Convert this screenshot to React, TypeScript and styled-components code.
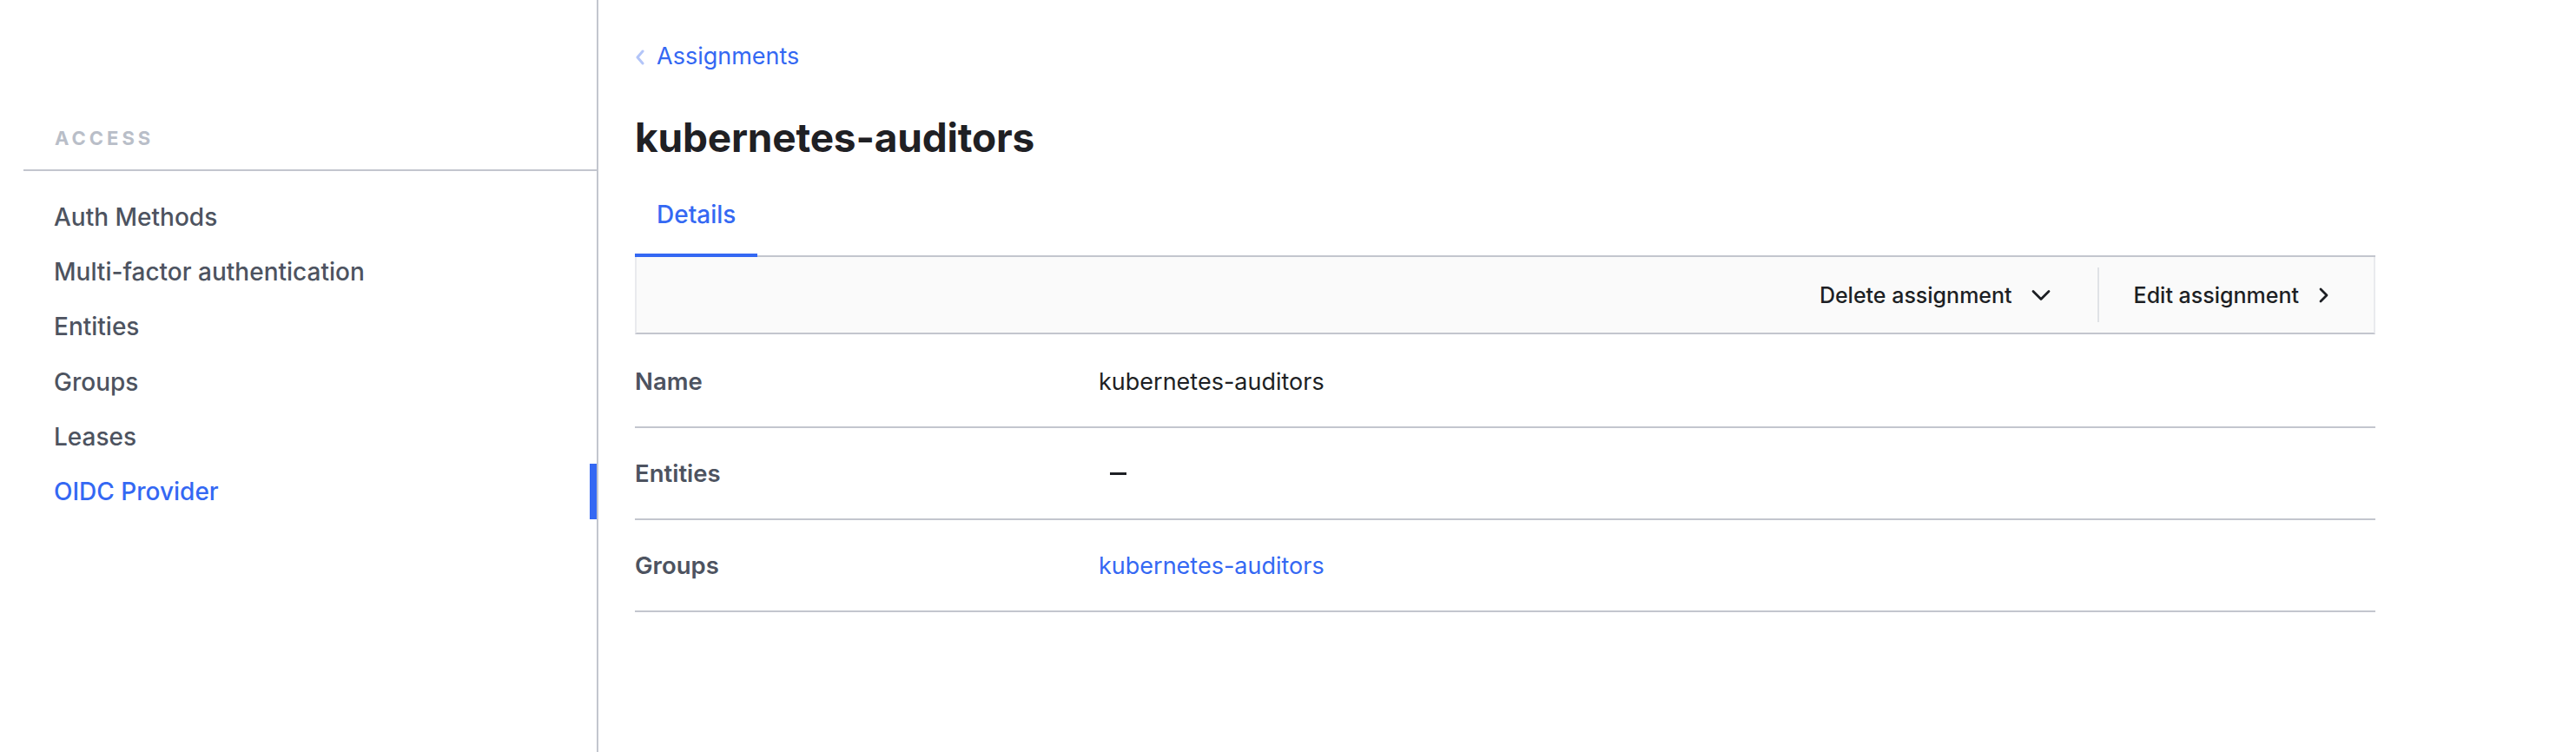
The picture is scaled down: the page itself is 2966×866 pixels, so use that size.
import React from "react";
import styled, { createGlobalStyle } from "styled-components";

const GlobalStyle = createGlobalStyle`
  html, body { margin: 0; padding: 0; background: #ffffff; }
  body { font-family: Inter, "Noto Sans", "Liberation Sans", sans-serif; -webkit-font-smoothing: antialiased; }
  * { box-sizing: border-box; }
`;

const BLUE = "#3468f3";
const LINE = "#c3c6ce";

const Page = styled.div`
  display: flex;
  min-height: 866px;
`;

const Sidebar = styled.nav`
  width: 689px;
  flex-shrink: 0;
  border-right: 2px solid ${LINE};
  padding: 146px 0 0 27px;
`;

const SectionLabel = styled.div`
  font-size: 22px;
  line-height: 26px;
  font-weight: 700;
  letter-spacing: 4px;
  color: #b9bec8;
  padding: 0 0 23px 36px;
  border-bottom: 2px solid ${LINE};
`;

const NavList = styled.ul`
  list-style: none;
  margin: 21px 0 0;
  padding: 0;
`;

const NavItem = styled.li<{ $active?: boolean }>`
  position: relative;
  height: 63.3px;
  display: flex;
  align-items: center;
  padding-left: 35px;
  font-size: 28px;
  font-weight: 500;
  color: ${(p) => (p.$active ? BLUE : "#4d5360")};
  &::after {
    content: "";
    display: ${(p) => (p.$active ? "block" : "none")};
    position: absolute;
    right: 0;
    top: 0;
    bottom: 0;
    width: 8px;
    background: ${BLUE};
  }
`;

const Main = styled.main`
  flex: 1;
  padding: 49px 0 0 42px;
`;

const Content = styled.div`
  width: 2004px;
`;

const Breadcrumb = styled.a`
  display: flex;
  align-items: center;
  gap: 13px;
  font-size: 27px;
  line-height: 32px;
  color: ${BLUE};
  text-decoration: none;
  svg { margin-top: 2px; }
`;

const Title = styled.h1`
  margin: 49px 0 0;
  font-size: 46px;
  line-height: 56px;
  font-weight: 700;
  color: #1f2024;
  letter-spacing: -0.2px;
`;

const TabList = styled.div`
  display: flex;
  margin-top: 21px;
  border-bottom: 2px solid ${LINE};
`;

const Tab = styled.div<{ $active?: boolean }>`
  padding: 24px 25px 29px;
  margin-bottom: -2px;
  font-size: 28px;
  line-height: 32px;
  font-weight: 500;
  color: ${(p) => (p.$active ? BLUE : "#4d5360")};
  border-bottom: 4px solid ${(p) => (p.$active ? BLUE : "transparent")};
`;

const Toolbar = styled.div`
  height: 89px;
  display: flex;
  justify-content: flex-end;
  align-items: center;
  background: #fafafa;
  border-left: 2px solid #e9eaee;
  border-right: 2px solid #e9eaee;
  border-bottom: 2px solid ${LINE};
`;

const ToolButton = styled.button<{ $padRight?: number }>`
  display: flex;
  align-items: center;
  gap: 22px;
  height: 100%;
  padding: 0 ${(p) => p.$padRight ?? 50}px 0 40px;
  border: none;
  background: transparent;
  font-family: inherit;
  font-size: 25px;
  font-weight: 500;
  color: #1d1f24;
  cursor: pointer;
`;

const Separator = styled.div`
  width: 2px;
  height: 63px;
  background: #e0e2e6;
`;

const Rows = styled.div`
  padding-top: 2px;
`;

const Row = styled.div`
  display: flex;
  align-items: center;
  height: 106px;
  border-bottom: 2px solid ${LINE};
`;

const Label = styled.div`
  width: 534px;
  font-size: 27.5px;
  font-weight: 600;
  color: #4d5360;
`;

const Value = styled.div<{ $link?: boolean }>`
  display: flex;
  align-items: center;
  font-size: 27px;
  font-weight: 400;
  color: ${(p) => (p.$link ? BLUE : "#1d1f24")};
`;

const ChevronLeft = () => (
  <svg width="12" height="18" viewBox="0 0 12 18" fill="none">
    <path d="M9 2 L3 9 L9 16" stroke="#b3c5f8" strokeWidth="3" strokeLinecap="round" strokeLinejoin="round" />
  </svg>
);

const ChevronDown = () => (
  <svg width="22" height="14" viewBox="0 0 22 14" fill="none">
    <path d="M2 2.5 L11 11.5 L20 2.5" stroke="#1d1f24" strokeWidth="2.8" strokeLinecap="round" strokeLinejoin="round" />
  </svg>
);

const ChevronRight = () => (
  <svg width="14" height="18" viewBox="0 0 14 18" fill="none">
    <path d="M3 2 L10 9 L3 16" stroke="#1d1f24" strokeWidth="2.8" strokeLinecap="round" strokeLinejoin="round" />
  </svg>
);

const Minus = () => (
  <svg width="34" height="27" viewBox="0 0 34 27" fill="none">
    <path d="M13 13.5 H32" stroke="#1d1f24" strokeWidth="3" />
  </svg>
);

const navItems = [
  "Auth Methods",
  "Multi-factor authentication",
  "Entities",
  "Groups",
  "Leases",
  "OIDC Provider",
];

export default function App() {
  return (
    <>
      <GlobalStyle />
      <Page>
        <Sidebar>
          <SectionLabel>ACCESS</SectionLabel>
          <NavList>
            {navItems.map((n) => (
              <NavItem key={n} $active={n === "OIDC Provider"}>
                {n}
              </NavItem>
            ))}
          </NavList>
        </Sidebar>
        <Main>
          <Content>
            <Breadcrumb href="#">
              <ChevronLeft />
              Assignments
            </Breadcrumb>
            <Title>kubernetes-auditors</Title>
            <TabList>
              <Tab $active>Details</Tab>
            </TabList>
            <Toolbar>
              <ToolButton $padRight={54}>
                Delete assignment
                <ChevronDown />
              </ToolButton>
              <Separator />
              <ToolButton>
                Edit assignment
                <ChevronRight />
              </ToolButton>
            </Toolbar>
            <Rows>
              <Row>
                <Label>Name</Label>
                <Value>kubernetes-auditors</Value>
              </Row>
              <Row>
                <Label>Entities</Label>
                <Value>
                  <Minus />
                </Value>
              </Row>
              <Row>
                <Label>Groups</Label>
                <Value $link>kubernetes-auditors</Value>
              </Row>
            </Rows>
          </Content>
        </Main>
      </Page>
    </>
  );
}
